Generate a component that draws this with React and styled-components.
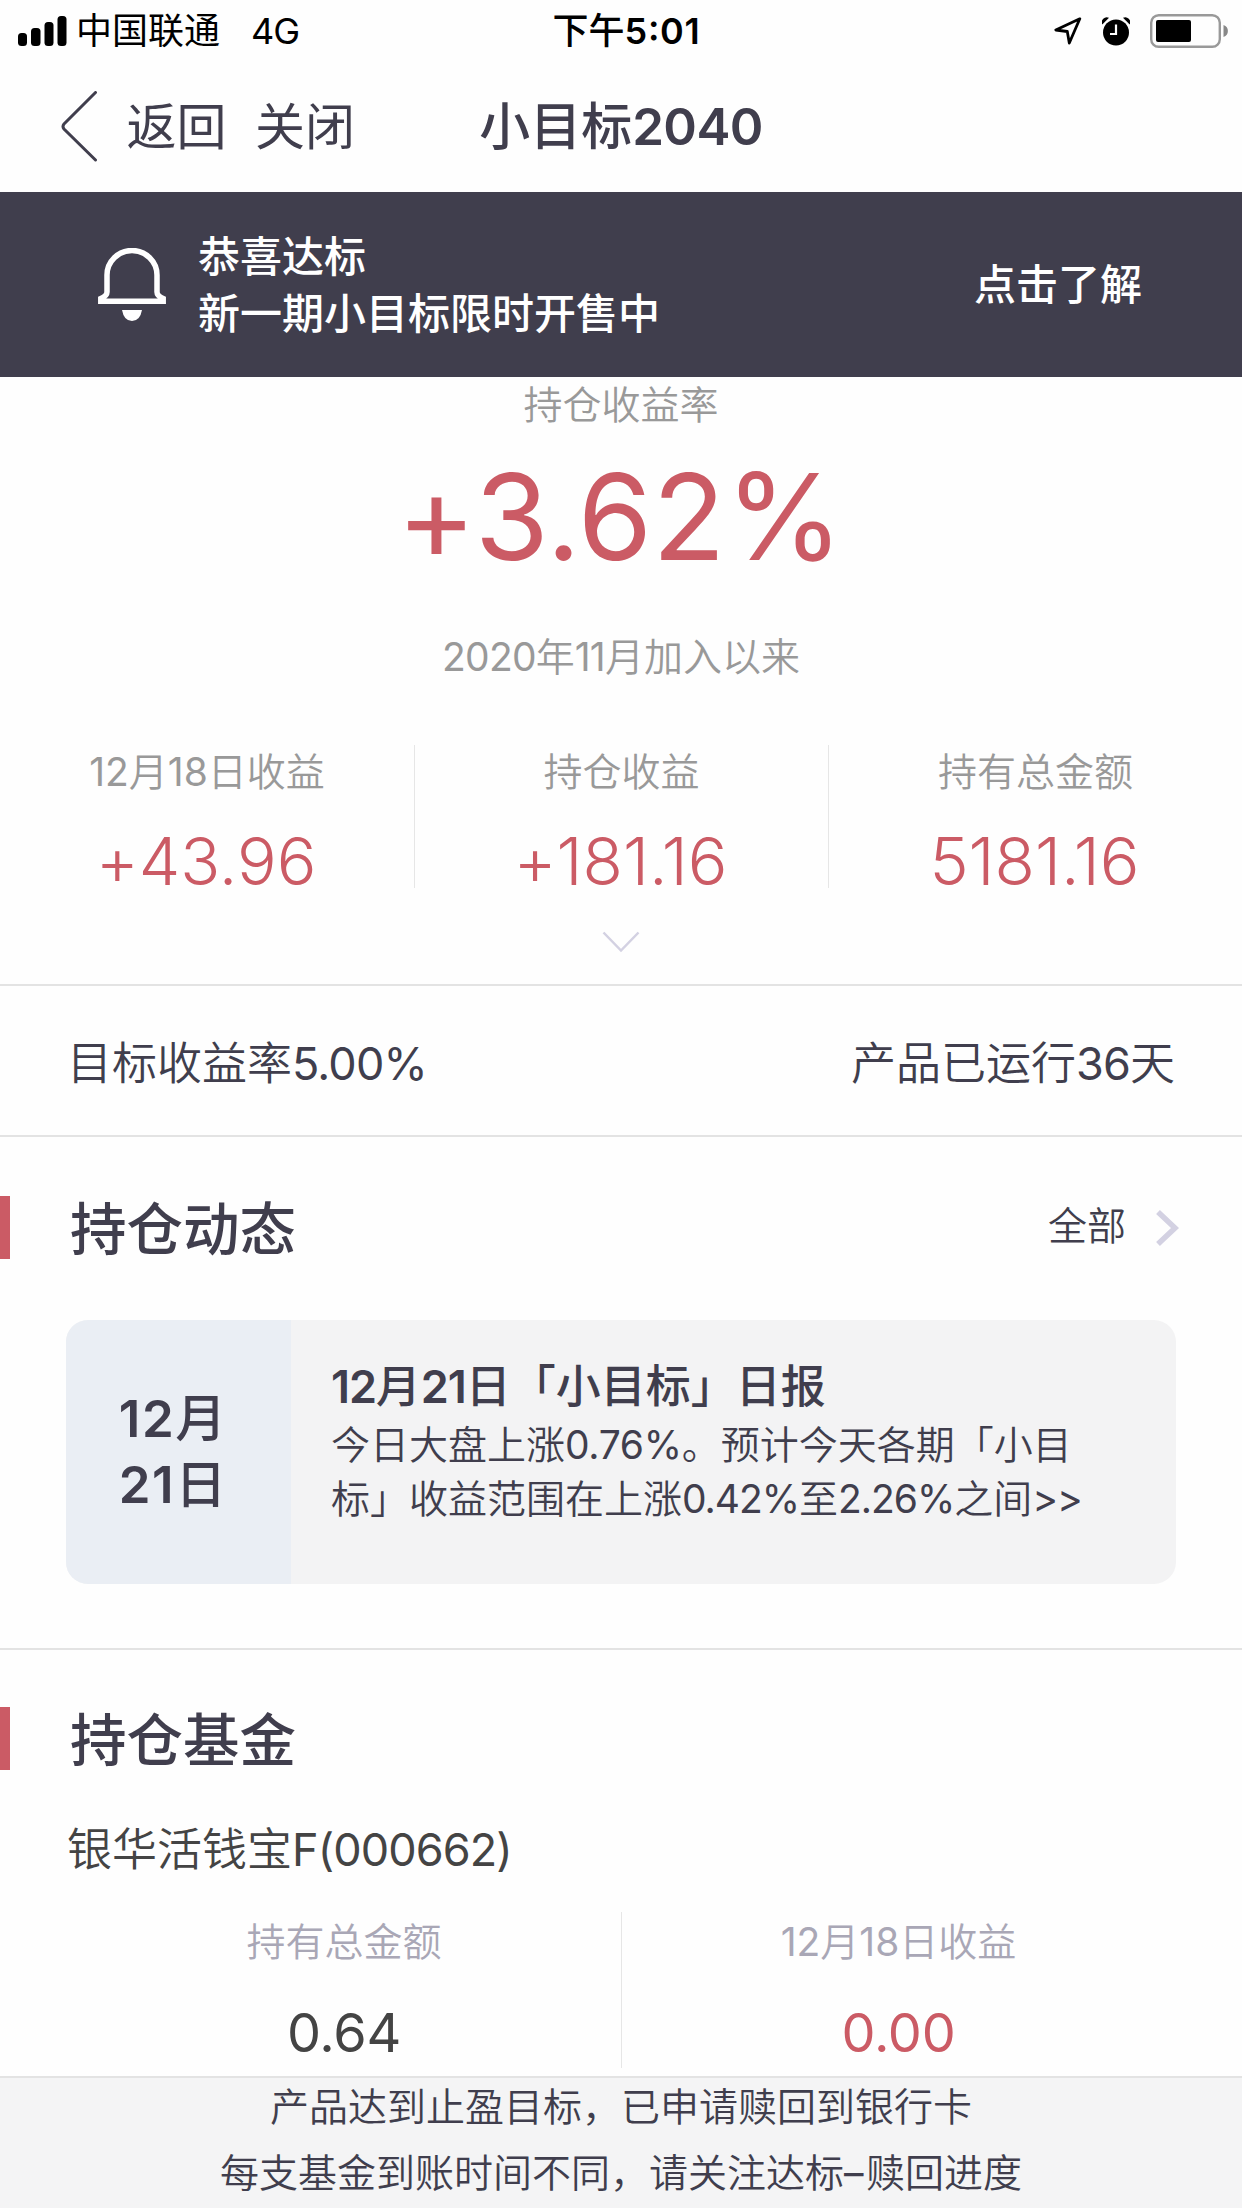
import styled, { createGlobalStyle } from "styled-components";

const GlobalStyle = createGlobalStyle`
  * {
    box-sizing: border-box;
  }

  body {
    margin: 0;
    background: #fefefe;
    color: #403e4d;
    font-family: Inter, "Noto Sans CJK SC", sans-serif;
    font-weight: 350;
    /* keeps + and > on the text height next to digits */
    font-feature-settings: "calt" 0;
    white-space: nowrap;
  }
`;

const stats = [
  { label: "12月18日收益", value: "+43.96" },
  { label: "持仓收益", value: "+181.16" },
  { label: "持有总金额", value: "5181.16" },
];

const fundStats = [
  { label: "持有总金额", value: "0.64" },
  { label: "12月18日收益", value: "0.00", red: true },
];

function Mixed({ text, tight = "0", weight }) {
  return text
    .split(/([0-9.%+()F>]+)/)
    .filter(Boolean)
    .map((part, i) =>
      /^[0-9.%+()F>]/.test(part) ? (
        <Num key={i} $tight={tight} $weight={weight}>{part}</Num>
      ) : (
        part
      )
    );
}

function StatusBar() {
  return (
    <Status>
      <Carrier>
        <svg width="49" height="30" viewBox="0 0 49 30">
          <rect x="0" y="17" width="9" height="13" rx="3.5" />
          <rect x="13" y="12" width="9.500" height="18" rx="3.5" />
          <rect x="26.500" y="6" width="9" height="24" rx="3.5" />
          <rect x="39.500" y="0" width="9" height="30" rx="3.5" />
        </svg>
        <span>中国联通</span>
        <Network>4G</Network>
      </Carrier>
      <Clock>下午<Num $tight="0.02em" $weight={600}>5:01</Num></Clock>
      <StatusIcons>
        <svg width="28" height="28" viewBox="0 0 28 28">
          <path
            d="M25.800 1.800 L1.800 13 L13.300 14.500 L15.300 26 Z"
            fill="none"
            stroke="#000"
            strokeWidth="2.800"
            strokeLinejoin="round"
          />
        </svg>
        <svg width="28" height="29" viewBox="0 0 28 29">
          <circle cx="14" cy="15.500" r="13" />
          <path d="M0.300 7.500 A5 5 0 0 1 7 0.800 M27.700 7.500 A5 5 0 0 0 21 0.800" />
          <path d="M14 7.500 V17 H8" fill="none" stroke="#fff" strokeWidth="2.200" />
        </svg>
        <svg width="78" height="34" viewBox="0 0 78 34">
          <rect x="1.200" y="1.200" width="68.600" height="31.600" rx="7.500" fill="none" stroke="#999" strokeWidth="2.400" />
          <rect x="6" y="6" width="35" height="22" rx="2" />
          <path d="M73.500 11 A6.300 6.300 0 0 1 73.500 23 Z" fill="#888" />
        </svg>
      </StatusIcons>
    </Status>
  );
}

function SectionHead({ title, more }) {
  return (
    <Head>
      <Marker />
      <HeadTitle>{title}</HeadTitle>
      {more && (
        <More>
          <MoreText>{more}</MoreText>
          <svg width="24" height="38" viewBox="0 0 24 38">
            <path d="M3 3 L20 19 L3 35" fill="none" stroke="#d3d1e2" strokeWidth="5.500" />
          </svg>
        </More>
      )}
    </Head>
  );
}

function App() {
  return (
    <Page>
      <GlobalStyle />
      <StatusBar />

      <Nav>
        <BackGroup>
          <svg width="37" height="72" viewBox="0 0 37 72">
            <path
              d="M34.500 1.500 L3 33 Q1 35.500 3 38 L34.500 69"
              fill="none"
              stroke="#403e4d"
              strokeWidth="3"
              strokeLinecap="round"
            />
          </svg>
          <NavLink>返回</NavLink>
          <NavLink>关闭</NavLink>
        </BackGroup>
        <NavTitle>小目标<Num $tight="-0.012em" $weight={600}>2040</Num></NavTitle>
      </Nav>

      <Banner>
        <svg width="68" height="73" viewBox="0 0 68 73">
          <path
            d="M9 44 V27 A25 24.500 0 0 1 59 27 V44 Q59 48 65.200 50.500 V53.300 H2.800 V50.500 Q9 48 9 44 Z"
            fill="none"
            stroke="#fff"
            strokeWidth="5.500"
          />
          <path d="M24 62 H44 Q42 73 34 73 Q26 73 24 62 Z" fill="#fff" />
        </svg>
        <BannerText>
          恭喜达标
          <br />
          新一期小目标限时开售中
        </BannerText>
        <span>点击了解</span>
      </Banner>

      <Hero>
        <HeroLabel>持仓收益率</HeroLabel>
        <HeroRate>+3.62%</HeroRate>
        <HeroNote><Mixed text="2020年11月加入以来" tight="-0.02em" /></HeroNote>
      </Hero>

      <Stats>
        {stats.map((s) => (
          <Stat key={s.label}>
            <StatLabel><Mixed text={s.label} /></StatLabel>
            <StatValue>{s.value}</StatValue>
          </Stat>
        ))}
      </Stats>
      <Expand>
        <svg width="38" height="22" viewBox="0 0 38 22">
          <path d="M1.500 1.500 L19 19.500 L36.500 1.500" fill="none" stroke="#d3d1e2" strokeWidth="2.500" />
        </svg>
      </Expand>

      <Target>
        <span><Mixed text="目标收益率5.00%" tight="-0.018em" /></span>
        <span><Mixed text="产品已运行36天" tight="-0.02em" /></span>
      </Target>

      <News>
        <SectionHead title="持仓动态" more="全部" />
        <Card>
          <CardDate>
            <span><Mixed text="12月" tight="0.03em" weight={600} /></span>
            <span><Mixed text="21日" tight="0.03em" weight={600} /></span>
          </CardDate>
          <CardBody>
            <CardTitle><Mixed text="12月21日「小目标」日报" tight="-0.025em" weight={600} /></CardTitle>
            <CardText>
              <Mixed text="今日大盘上涨0.76%。预计今天各期「小目" tight="-0.008em" />
              <br />
              <Mixed text="标」收益范围在上涨0.42%至2.26%之间>>" tight="-0.026em" />
            </CardText>
          </CardBody>
        </Card>
      </News>

      <Funds>
        <SectionHead title="持仓基金" />
        <FundName><Mixed text="银华活钱宝F(000662)" tight="-0.02em" /></FundName>
        <FundStats>
          {fundStats.map((s) => (
            <FundStat key={s.label}>
              <FundLabel><Mixed text={s.label} /></FundLabel>
              <FundValue $red={s.red}>{s.value}</FundValue>
            </FundStat>
          ))}
        </FundStats>
      </Funds>

      <Footer>
        <span>产品达到止盈目标，已申请赎回到银行卡</span>
        <span>每支基金到账时间不同，请关注达标<Num $tight="0.06em">–</Num>赎回进度</span>
      </Footer>
    </Page>
  );
}

const Page = styled.main`
  width: 1242px;
  height: 2208px;
  overflow: hidden;
  display: flex;
  flex-direction: column;

  svg {
    display: block;
    flex: none;
  }
`;

const Num = styled.span`
  letter-spacing: ${(p) => p.$tight};
  font-weight: ${(p) => p.$weight || 400};
`;

/* status bar */
const Status = styled.div`
  height: 62px;
  padding: 0 14px 0 18px;
  display: grid;
  grid-template-columns: 1fr auto 1fr;
  align-items: center;
  color: #000;
  font-size: 36px;
  font-weight: 400;
  line-height: 60px;
`;

const Carrier = styled.div`
  display: flex;
  align-items: center;
  gap: 9px;
`;

const Network = styled.span`
  margin-left: 22px;
  letter-spacing: -1px;
`;

const Clock = styled.div`
  padding-left: 7px;
  font-weight: 500;
  font-feature-settings: "calt" 1;
`;

const StatusIcons = styled.div`
  display: flex;
  justify-content: flex-end;
  align-items: center;
  gap: 20px;
`;

/* title bar */
const Nav = styled.div`
  height: 130px;
  padding: 0 61px;
  display: grid;
  grid-template-columns: 1fr auto 1fr;
  align-items: center;
  font-size: 51px;
  line-height: 70px;
`;

const BackGroup = styled.div`
  display: flex;
  align-items: center;
  font-size: 50px;
  font-weight: 400;
`;

const NavLink = styled.span`
  margin-left: 28.5px;
`;

const NavTitle = styled.div`
  font-weight: 500;
`;

const Banner = styled.div`
  height: 185px;
  padding: 0 100px 0 98px;
  display: flex;
  align-items: center;
  background: #403e4d;
  color: #fff;
  font-size: 42px;
  font-weight: 500;
  line-height: 57px;
`;

const BannerText = styled.div`
  flex: 1;
  margin-left: 32px;
`;

/* yield */
const Hero = styled.div`
  text-align: center;
  color: #999;
  font-size: 39px;
`;

const HeroLabel = styled.div`
  line-height: 56px;
`;

const HeroRate = styled.div`
  padding-right: 2px;
  color: #cb5b65;
  font-size: 120px;
  font-weight: 390;
  line-height: 168px;
`;

const HeroNote = styled.div`
  line-height: 112px;
`;

const Stats = styled.div`
  margin-top: 32px;
  display: grid;
  grid-template-columns: repeat(3, 1fr);
  text-align: center;
`;

const Stat = styled.div`
  height: 143px;

  & + & {
    border-left: 1px solid #e6e6e6;
  }
`;

const StatLabel = styled.div`
  color: #999;
  font-size: 39px;
  line-height: 53px;
`;

const StatValue = styled.div`
  margin-top: 36px;
  padding-right: 2px;
  color: #cb5b65;
  font-size: 66px;
  font-weight: 300;
  line-height: 54px;
`;

const Expand = styled.div`
  height: 96px;
  padding-top: 43px;
  display: flex;
  justify-content: center;
`;

const Target = styled.div`
  height: 153px;
  padding: 0 67px;
  display: flex;
  justify-content: space-between;
  align-items: center;
  border-top: 2px solid #e3e3e3;
  border-bottom: 2px solid #e3e3e3;
  font-size: 45px;
`;

/* sections */
const Head = styled.div`
  height: 63px;
  padding-right: 63px;
  display: flex;
  align-items: center;
`;

const Marker = styled.i`
  width: 10px;
  height: 63px;
  background: #cb5b65;
`;

const HeadTitle = styled.h2`
  flex: 1;
  margin: 0;
  padding: 5px 0 0 60px;
  font-size: 56.5px;
  font-weight: 500;
  line-height: 66px;
`;

const More = styled.div`
  display: flex;
  align-items: center;
  gap: 29px;
`;

const MoreText = styled.span`
  padding-bottom: 3px;
  font-size: 39px;
  line-height: 54px;
`;

const News = styled.section`
  height: 513px;
  padding-top: 59px;
  border-bottom: 2px solid #e3e3e3;
`;

const Card = styled.div`
  height: 264px;
  margin: 61px 66px 0;
  display: flex;
  border-radius: 22px;
  overflow: hidden;
  background: #f3f3f4;
`;

const CardDate = styled.div`
  width: 225px;
  padding-right: 12px;
  display: flex;
  flex-direction: column;
  align-items: center;
  justify-content: center;
  background: #eaeef4;
  font-size: 51px;
  font-weight: 500;
  line-height: 66px;
`;

const CardBody = styled.div`
  padding: 35px 0 0 40px;
`;

const CardTitle = styled.div`
  font-size: 45px;
  font-weight: 500;
  line-height: 63px;
`;

const CardText = styled.div`
  font-size: 39px;
  line-height: 54px;
`;

const Funds = styled.section`
  padding-top: 57px;
`;

const FundName = styled.div`
  margin: 40px 67px 22px;
  color: #444;
  font-size: 45px;
  line-height: 80px;
`;

const FundStats = styled.div`
  height: 156px;
  margin: 0 67px 8px;
  display: grid;
  grid-template-columns: 1fr 1fr;
  text-align: center;
`;

const FundStat = styled.div`
  & + & {
    border-left: 1px solid #e6e6e6;
  }
`;

const FundLabel = styled.div`
  color: #a9a7b6;
  font-size: 39px;
  line-height: 60px;
`;

const FundValue = styled.div`
  margin-top: 26px;
  color: ${(p) => (p.$red ? "#cb5b65" : "#444")};
  font-size: 54px;
  font-weight: 370;
  letter-spacing: -0.005em;
  line-height: 70px;
`;

const Footer = styled.footer`
  flex: 1;
  display: flex;
  flex-direction: column;
  align-items: center;
  gap: 8px;
  border-top: 2px solid #e3e3e3;
  background: #f4f4f5;
  font-size: 39px;
  line-height: 58px;
`;

export default App;
